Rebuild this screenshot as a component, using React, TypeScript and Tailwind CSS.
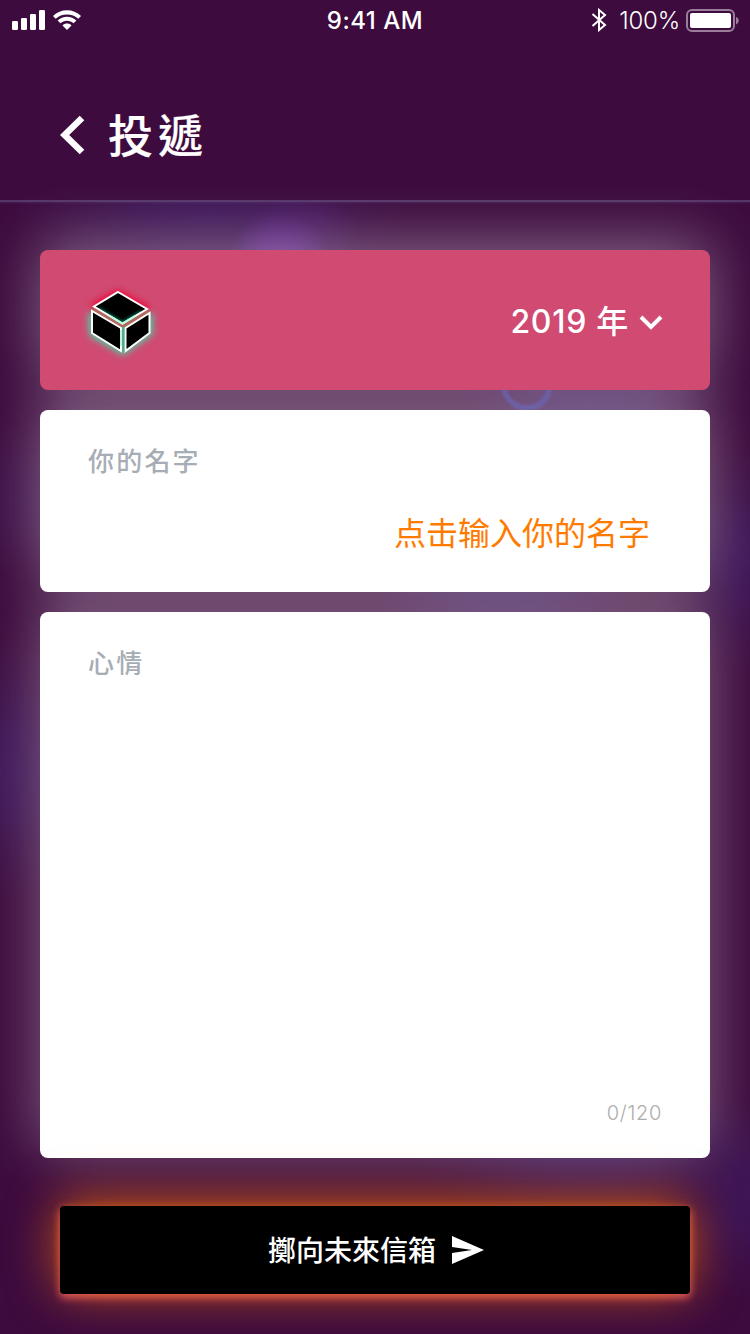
function StatusBar() {
  return (
    <div className="grid h-10 grid-cols-3 items-center text-white">
      <svg className="ml-3 h-[20px] w-[70px]" viewBox="0 0 70 20" fill="white">
        <rect x="0" y="11" width="6" height="9" rx="1.3" />
        <rect x="9" y="8" width="6" height="12" rx="1.3" />
        <rect x="18" y="4" width="6" height="16" rx="1.3" />
        <rect x="27" y="0" width="6" height="20" rx="1.3" />
        <path d="M41 6C48.500 -1.800 61.500 -1.800 69 6L66.300 8.800C60.500 2.900 49.500 2.900 43.700 8.800Z" />
        <path d="M45.600 10.600C50.500 5.500 59.500 5.500 64.400 10.600L61.600 13.300C58.200 9.800 51.800 9.800 48.400 13.300Z" />
        <path d="M50.500 15.400C53 13 57 13 59.500 15.400L55 20Z" />
      </svg>
      <span className="pt-[2px] text-center text-[24px] leading-none font-medium tracking-[0.5px]">9:41 AM</span>
      <div className="flex items-center justify-end pr-[10px]">
        <svg className="mr-[12px] h-[24px] w-[16px]" viewBox="0 0 16 24" fill="none" stroke="white" strokeWidth="2">
          <path d="M1.500 6L14 17L8 22V2L14 7L1.500 18" />
        </svg>
        <span className="mr-[6px] pt-[2px] text-[24px] leading-none font-light tracking-[-0.2px]">100%</span>
        <svg className="h-[24px] w-[54px]" viewBox="0 0 54 24">
          <rect x="1" y="2" width="47" height="21" rx="5" fill="none" stroke="#9a7d9b" strokeWidth="2" />
          <rect x="4" y="5" width="41" height="15" rx="2" fill="white" />
          <path d="M50 9C53.700 10 53.700 15 50 16.500Z" fill="#9a7d9b" />
        </svg>
      </div>
    </div>
  );
}

function Backdrop() {
  return (
    <svg className="absolute inset-0 h-[1334px] w-[750px]" viewBox="0 0 750 1334">
      <defs>
        <radialGradient id="blue">
          <stop offset="0" stopColor="#3e185c" stopOpacity="0.85" />
          <stop offset="0.35" stopColor="#3e185c" stopOpacity="0.65" />
          <stop offset="0.7" stopColor="#3e185c" stopOpacity="0.25" />
          <stop offset="1" stopColor="#3e185c" stopOpacity="0" />
        </radialGradient>
        <radialGradient id="violet">
          <stop offset="0" stopColor="#62238f" stopOpacity="0.9" />
          <stop offset="0.5" stopColor="#62238f" stopOpacity="0.55" />
          <stop offset="1" stopColor="#62238f" stopOpacity="0" />
        </radialGradient>
        <filter id="soft"><feGaussianBlur stdDeviation="1.5" /></filter>
      </defs>
      <ellipse cx="210" cy="210" rx="200" ry="85" fill="url(#blue)" />
      <ellipse cx="300" cy="235" rx="60" ry="45" fill="url(#violet)" opacity="0.35" />
      <ellipse cx="278" cy="262" rx="52" ry="50" fill="url(#violet)" />
      <ellipse cx="590" cy="400" rx="130" ry="80" fill="url(#blue)" />
      <circle cx="527" cy="385" r="23" fill="none" stroke="#35288a" strokeWidth="5" filter="url(#soft)" />
      <ellipse cx="505" cy="590" rx="130" ry="80" fill="url(#blue)" />
      <ellipse cx="20" cy="500" rx="65" ry="80" fill="url(#blue)" opacity="0.4" />
      <ellipse cx="750" cy="560" rx="80" ry="110" fill="url(#blue)" />
      <ellipse cx="0" cy="770" rx="90" ry="130" fill="url(#blue)" />
      <ellipse cx="590" cy="1150" rx="180" ry="80" fill="url(#blue)" />
      <ellipse cx="755" cy="1200" rx="90" ry="100" fill="url(#blue)" />
    </svg>
  );
}

function CubeLogo() {
  return (
    <svg className="h-[80px] w-[80px] overflow-visible" viewBox="0 0 80 80">
      <defs>
        <filter id="glow" x="-30%" y="-30%" width="160%" height="160%"><feGaussianBlur stdDeviation="3.5" /></filter>
        <filter id="inner" x="-30%" y="-30%" width="160%" height="160%"><feGaussianBlur stdDeviation="1.8" /></filter>
        <clipPath id="lid"><path d="M38 12L67 29L42.500 43.500L14 26.500Z" /></clipPath>
      </defs>
      <path d="M14 25L38 12L67 28L43 42Z" fill="#f00030" stroke="#f00030" strokeWidth="4" filter="url(#glow)" />
      <path d="M11 36L40 49L70 36V53L43 72L12 54Z" fill="#45d8a8" stroke="#45d8a8" strokeWidth="5" filter="url(#glow)" />
      <path d="M12 29.500L42.500 46L69 31.500" fill="none" stroke="#b0695c" strokeWidth="4" />
      <path d="M38 12L67 29L42.500 43.500L14 26.500Z" fill="#000" />
      <path d="M18 29L42.500 43.500L62 32" fill="none" stroke="#00a877" strokeWidth="4" filter="url(#inner)" clipPath="url(#lid)" opacity="0.7" />
      <path d="M38 12L67 29L42.500 43.500L14 26.500Z" fill="none" stroke="#fff" strokeWidth="2" />
      <path d="M30 36L42.500 43.500L55 36" fill="none" stroke="#b5ffe3" strokeWidth="2" />
      <path d="M12 31L41 48V71L12 53Z" fill="#000" stroke="#fff" strokeWidth="2" />
      <path d="M45.500 48L69.500 33V53L45.500 71Z" fill="#000" stroke="#fff" strokeWidth="2" />
      <path d="M43.200 47V72" stroke="#5aa98a" strokeWidth="2.500" />
      <path d="M41 50V66" stroke="#a5f5d8" strokeWidth="1.500" />
    </svg>
  );
}

export default function App() {
  return (
    <div className="relative isolate flex h-[1334px] w-[750px] flex-col overflow-hidden bg-[#3d0b3e] font-['Inter','Noto_Sans_CJK_TC',sans-serif]">
      <Backdrop />
      <header className="relative h-[202px] border-b-2 border-[#56366a] bg-[#3d0b3e] shadow-[0_0_3px_rgba(120,90,150,0.4)]">
        <StatusBar />
        <div className="flex h-[192px] items-center pl-[60px] text-white">
          <svg className="-mt-[2px] h-[40px] w-[25px]" viewBox="0 0 25 40" fill="none" stroke="white" strokeWidth="6.500">
            <path d="M22 3L4.600 20L22 37" />
          </svg>
          <h1 className="ml-[23px] text-[45px] leading-none font-medium tracking-[5px] [-webkit-text-stroke:0.2px_white]">投遞</h1>
        </div>
      </header>

      <main className="relative mt-12 flex flex-col gap-5 px-10">
        <button className="relative z-30 flex h-[140px] items-center justify-between rounded-lg bg-[#d04a72] pr-[47px] pl-10 text-white shadow-[0_-8px_60px_rgba(245,245,245,0.4)]">
          <CubeLogo />
          <span className="flex items-center gap-[10px]">
            <span className="pt-[3px] text-[32px] leading-none font-medium tracking-[0.7px]">2019 年</span>
            <svg className="mt-[3px] h-[16px] w-[24px]" viewBox="0 0 24 16" fill="none" stroke="white" strokeWidth="4">
              <path d="M2 3L12 13L22 3" />
            </svg>
          </span>
        </button>
        <section className="relative z-20 flex h-[182px] flex-col rounded-lg bg-white px-12 pt-[39px] shadow-[0_-8px_60px_rgba(255,255,255,0.4)]">
          <label className="text-[26px] leading-[26px] font-medium tracking-[2.2px] text-[#a7adb5]">你的名字</label>
          <p className="mt-[39px] mr-[12px] text-right font-['Noto_Sans_CJK_SC',sans-serif] text-[32px] leading-[34px] text-[#ff7b00]">点击输入你的名字</p>
        </section>
        <section className="relative z-10 flex h-[546px] flex-col justify-between rounded-lg bg-white px-12 pt-[39px] pb-[35px] shadow-[0_-8px_60px_rgba(255,255,255,0.36)]">
          <label className="text-[26px] leading-[26px] font-medium tracking-[2.2px] text-[#a7adb5]">心情</label>
          <span className="text-right text-[20px] leading-5 font-light tracking-[0.7px] text-[#adadad]">0/120</span>
        </section>
      </main>

      <button className="relative z-10 mx-[60px] mt-12 flex h-[88px] items-center justify-center gap-4 rounded bg-black pl-[2px] text-white shadow-[0_-4px_50px_rgba(255,122,0,0.75),0_0_10px_rgba(255,122,0,0.25),0_4px_8px_rgba(208,74,114,1)]">
        <span className="pt-[2px] text-[28px] leading-none font-medium">擲向未來信箱</span>
        <svg className="h-[28px] w-[32px]" viewBox="0 0 32 28" fill="white">
          <path d="M0 0L32 14L0 28V17L20 14L0 11Z" />
        </svg>
      </button>
    </div>
  );
}
